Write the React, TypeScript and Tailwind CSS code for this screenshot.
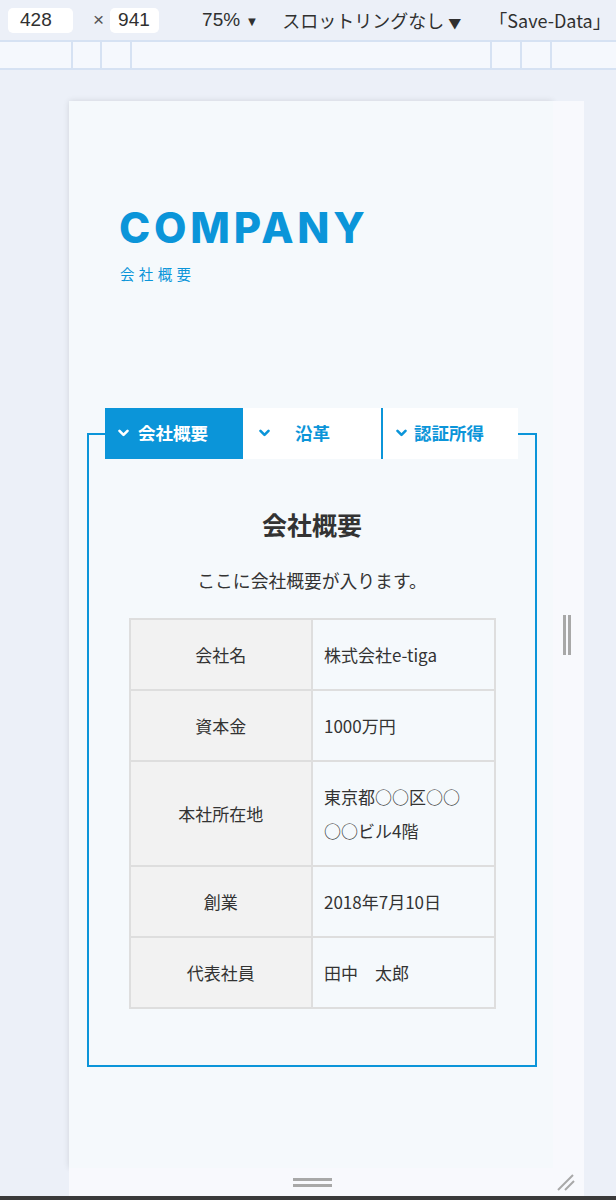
const BLUE = "#0b95d9";

function Chevron({ color }: { color: string }) {
  return (
    <svg width="11" height="8" viewBox="0 0 11 8" className="shrink-0">
      <polyline points="1.5,1.8 5.5,5.8 9.5,1.8" fill="none" stroke={color} strokeWidth="2.6" strokeLinecap="round" strokeLinejoin="round" />
    </svg>
  );
}

const rows: { label: string; value: React.ReactNode }[] = [
  { label: "会社名", value: "株式会社e-tiga" },
  { label: "資本金", value: "1000万円" },
  {
    label: "本社所在地",
    value: (
      <>
        東京都○○区○○
        <br />
        ○○ビル4階
      </>
    ),
  },
  { label: "創業", value: "2018年7月10日" },
  { label: "代表社員", value: "田中　太郎" },
];

function Toolbar() {
  return (
    <div className="h-[40px] flex items-center text-[19px] text-[#303030] whitespace-nowrap font-['Liberation_Sans','Noto_Sans_CJK_JP',sans-serif]">
      <div className="ml-[8px] w-[65px] h-[25px] bg-white rounded-[5px] pl-[12px] flex items-center">428</div>
      <span className="ml-[20px] text-[#555]">×</span>
      <div className="ml-[6px] w-[49px] h-[25px] bg-white rounded-[5px] pl-[8px] flex items-center">941</div>
      <span className="ml-[43px]">
        75% <span className="text-[13px]">▼</span>
      </span>
      <span className="ml-[24px] text-[18px] font-['Noto_Sans_CJK_JP',sans-serif]">
        スロットリングなし <span className="text-[13px]">▼</span>
      </span>
      <span className="ml-[28px] text-[18px] font-['Noto_Sans_CJK_JP',sans-serif]">「Save-Data」</span>
    </div>
  );
}

function Ruler() {
  return (
    <div className="h-[30px] bg-[#f5f8fd] border-y-2 border-[#d6e2f3] flex">
      <div className="ml-[71px] w-[2px] bg-[#d6e2f3]" />
      <div className="ml-[27px] w-[2px] bg-[#d6e2f3]" />
      <div className="ml-[28px] w-[2px] bg-[#d6e2f3]" />
      <div className="ml-[358px] w-[2px] bg-[#d6e2f3]" />
      <div className="ml-[28px] w-[2px] bg-[#d6e2f3]" />
      <div className="ml-[28px] w-[2px] bg-[#d6e2f3]" />
    </div>
  );
}

function Page() {
  return (
    <div className="w-[484px] bg-[#f5f9fc] shadow-[0_0_6px_rgba(0,0,0,0.12)] font-['Noto_Sans_CJK_JP',sans-serif] text-[#333]">
      <div className="pt-[106px] pl-[50px]">
        <h1 className="text-[42px] leading-none font-extrabold tracking-[0.09em] text-[#0b95d9] font-['Inter',sans-serif]">
          COMPANY
        </h1>
        <p className="mt-[18px] text-[14.5px] leading-none tracking-[0.3em] text-[#0b95d9] pl-[1px]">会社概要</p>
      </div>

      <div className="mt-[151px] ml-[18px] w-[450px] border-2 border-[#0b95d9] pb-[56px]">
        <div className="-mt-[27px] mx-[16px] flex h-[51px] text-[17.5px] font-bold leading-none">
          <div className="w-[138px] bg-[#0b95d9] text-white flex items-center pl-[13px]">
            <Chevron color="#ffffff" />
            <span className="ml-[9px]">会社概要</span>
          </div>
          <div className="w-[138px] bg-white text-[#0b95d9] flex items-center pl-[16px]">
            <Chevron color={BLUE} />
            <span className="ml-[25px]">沿革</span>
          </div>
          <div className="w-[137px] bg-white text-[#0b95d9] border-l-2 border-[#0b95d9] flex items-center pl-[13px]">
            <Chevron color={BLUE} />
            <span className="ml-[7px]">認証所得</span>
          </div>
        </div>

        <h2 className="mt-[53px] text-center text-[25px] font-bold leading-none">会社概要</h2>
        <p className="mt-[35px] text-center text-[17.8px] leading-none">ここに会社概要が入ります。</p>

        <table className="mt-[29px] mx-auto w-[367px] border-collapse text-[17px] leading-[34px]">
          <tbody>
            {rows.map((r) => (
              <tr key={r.label}>
                <th className="w-1/2 border-2 border-[#dedede] bg-[#f2f2f2] py-[17.5px] font-normal text-center">
                  {r.label}
                </th>
                <td className="w-1/2 border-2 border-[#dedede] py-[17.5px] pl-[11px]">{r.value}</td>
              </tr>
            ))}
          </tbody>
        </table>
      </div>
    </div>
  );
}

export default function App() {
  return (
    <div className="w-[616px] h-[1200px] overflow-hidden bg-[#ecf0f8] flex flex-col">
      <Toolbar />
      <Ruler />
      <div className="flex-1 flex flex-col pl-[69px] pt-[31px]">
        <div className="w-[515px] flex-1 flex flex-col">
          <div className="flex flex-1">
            <Page />
            <div className="w-[31px] bg-[#f8f9fd] flex flex-col items-center">
              <div className="mt-[514px] flex gap-[2px] -ml-[3px]">
                <div className="w-[3px] h-[40px] bg-[#a8a8a8]" />
                <div className="w-[3px] h-[40px] bg-[#a8a8a8]" />
              </div>
            </div>
          </div>
          <div className="h-[28px] bg-[#f8f9fd] flex items-center relative">
            <div className="ml-[224px] flex flex-col gap-[3px]">
              <div className="w-[39px] h-[3px] bg-[#a8a8a8]" />
              <div className="w-[39px] h-[3px] bg-[#a8a8a8]" />
            </div>
            <svg width="20" height="20" viewBox="0 0 20 20" className="ml-auto mr-[8px]">
              <line x1="2" y1="18" x2="17" y2="3" stroke="#a8a8a8" strokeWidth="2" />
              <line x1="9" y1="18" x2="18" y2="9" stroke="#a8a8a8" strokeWidth="2" />
            </svg>
          </div>
        </div>
      </div>
      <div className="h-[4px] bg-[#3a3a3a]" />
    </div>
  );
}
